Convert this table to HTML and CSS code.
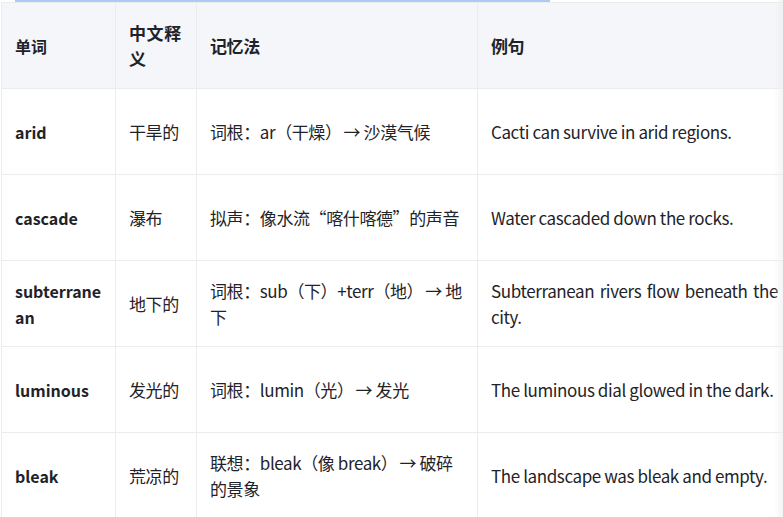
FILE: index.html
```html
<!DOCTYPE html>
<html lang="zh">
<head>
<meta charset="utf-8">
<link rel="stylesheet" href="styles.css">
</head>
<body>
<div class="scroller">
  <div class="track"><div class="thumb"></div></div>
  <table class="vocab">
    <colgroup>
      <col class="c1"><col class="c2"><col class="c3"><col class="c4">
    </colgroup>
    <thead>
      <tr><th>单词</th><th class="spread">中文释义</th><th>记忆法</th><th>例句</th></tr>
    </thead>
    <tbody>
      <tr><td class="word">arid</td><td>干旱的</td><td>词根：ar（干燥）<span class="arr">→</span> 沙漠气候</td><td>Cacti can survive in arid regions.</td></tr>
      <tr><td class="word">cascade</td><td>瀑布</td><td>拟声：像水流“喀什喀德”的声音</td><td>Water cascaded down the rocks.</td></tr>
      <tr><td class="word">subterranean</td><td>地下的</td><td>词根：sub（下）+terr（地）<span class="arr">→</span> 地下</td><td>Subterranean rivers flow beneath the city.</td></tr>
      <tr><td class="word">luminous</td><td>发光的</td><td>词根：lumin（光）<span class="arr">→</span> 发光</td><td>The luminous dial glowed in the dark.</td></tr>
      <tr><td class="word">bleak</td><td>荒凉的</td><td>联想：bleak（像 break）<span class="arr">→</span> 破碎的景象</td><td>The landscape was bleak and empty.</td></tr>
    </tbody>
  </table>
  <div class="fade"></div>
</div>
</body>
</html>
```

FILE: styles.css
```css
html, body {
  margin: 0;
  padding: 0;
  background: #ffffff;
}
body {
  font-family: "Noto Sans CJK SC", "Noto Sans", sans-serif;
  font-size: 17px;
  letter-spacing: -0.4px;
  color: #1f2329;
  overflow: hidden;
}
.scroller {
  position: relative;
  width: 783px;
  height: 517px;
  overflow: hidden;
}
.track {
  height: 2px;
  padding-left: 15px;
}
.thumb {
  width: 535px;
  height: 2px;
  background: #a9cbf5;
}
.vocab {
  border-collapse: collapse;
  table-layout: fixed;
  width: 840px;
  margin-left: 1px;
}
.c1 { width: 114px; }
.c2 { width: 81px; }
.c3 { width: 281px; }
.c4 { width: 364px; }
.vocab th, .vocab td {
  border: 1px solid #ececec;
  padding: 0 13px;
  height: 85px;
  line-height: 26px;
  text-align: left;
  vertical-align: middle;
  word-break: break-all;
}
.vocab th {
  background: #f5f6fa;
  font-weight: 700;
}
.vocab th.spread {
  letter-spacing: 0.6px;
}
.vocab td.word,
.vocab th:first-child {
  font-weight: 700;
  font-size: 16px;
  letter-spacing: 0;
}
.vocab td:last-child, .vocab th:last-child {
  padding-right: 63px;
  text-align: justify;
  word-break: normal;
}
.arr {
  margin: 0 0 0 2px;
}
.fade {
  position: absolute;
  top: 0;
  right: 0;
  width: 9px;
  height: 100%;
  background: linear-gradient(to right, rgba(240, 240, 240, 0), rgba(235, 235, 235, 0.55));
}
```
